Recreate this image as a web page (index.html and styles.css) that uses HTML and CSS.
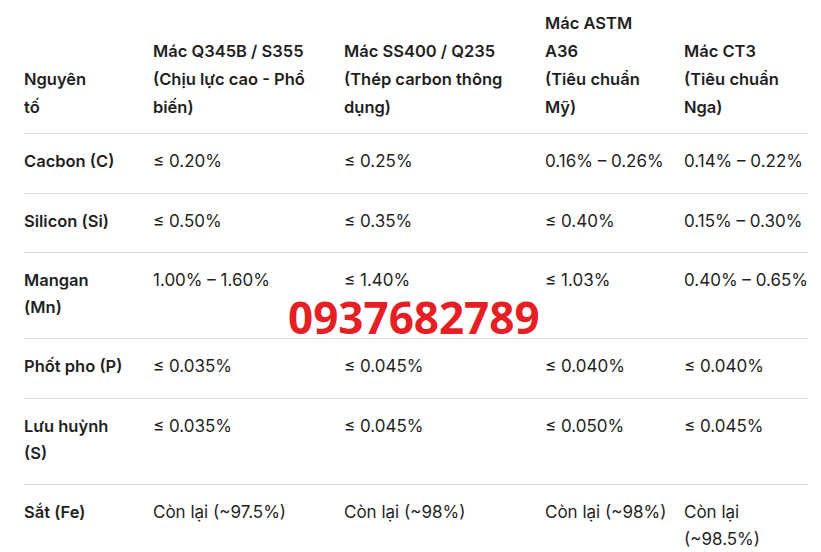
FILE: index.html
```html
<!DOCTYPE html>
<html lang="vi">
<head>
<meta charset="utf-8">
<title>Thành phần hóa học thép</title>
<link rel="stylesheet" href="styles.css">
</head>
<body>
<div class="wrap">
  <table class="spec">
    <colgroup>
      <col class="c1"><col class="c2"><col class="c3"><col class="c4"><col class="c5">
    </colgroup>
    <thead>
      <tr>
        <th>Nguyên<br>tố</th>
        <th>Mác Q345B / S355<br>(Chịu lực cao - Phổ<br>biến)</th>
        <th>Mác SS400 / Q235<br>(Thép carbon thông<br>dụng)</th>
        <th>Mác ASTM<br>A36<br>(Tiêu chuẩn<br>Mỹ)</th>
        <th>Mác CT3<br>(Tiêu chuẩn<br>Nga)</th>
      </tr>
    </thead>
    <tbody>
      <tr>
        <th>Cacbon (C)</th>
        <td><span class="le">≤</span> 0.20%</td>
        <td><span class="le">≤</span> 0.25%</td>
        <td>0.16% – 0.26%</td>
        <td>0.14% – 0.22%</td>
      </tr>
      <tr>
        <th>Silicon (Si)</th>
        <td><span class="le">≤</span> 0.50%</td>
        <td><span class="le">≤</span> 0.35%</td>
        <td><span class="le">≤</span> 0.40%</td>
        <td>0.15% – 0.30%</td>
      </tr>
      <tr>
        <th>Mangan<br>(Mn)</th>
        <td>1.00% – 1.60%</td>
        <td><span class="le">≤</span> 1.40%</td>
        <td><span class="le">≤</span> 1.03%</td>
        <td>0.40% – 0.65%</td>
      </tr>
      <tr>
        <th>Phốt pho (P)</th>
        <td><span class="le">≤</span> 0.035%</td>
        <td><span class="le">≤</span> 0.045%</td>
        <td><span class="le">≤</span> 0.040%</td>
        <td><span class="le">≤</span> 0.040%</td>
      </tr>
      <tr>
        <th>Lưu huỳnh<br>(S)</th>
        <td><span class="le">≤</span> 0.035%</td>
        <td><span class="le">≤</span> 0.045%</td>
        <td><span class="le">≤</span> 0.050%</td>
        <td><span class="le">≤</span> 0.045%</td>
      </tr>
      <tr>
        <th>Sắt (Fe)</th>
        <td>Còn lại (~97.5%)</td>
        <td>Còn lại (~98%)</td>
        <td>Còn lại (~98%)</td>
        <td>Còn lại<br>(~98.5%)</td>
      </tr>
    </tbody>
  </table>
  <div class="phone">0937682789</div>
</div>
</body>
</html>
```

FILE: styles.css
```css
html, body {
  margin: 0;
  padding: 0;
  background: #ffffff;
}

body {
  font-family: Inter, "Noto Sans", sans-serif;
  color: #1f1f1f;
}

.wrap {
  position: relative;
  padding: 0 13px 0 24px;
}

.spec {
  width: 784px;
  table-layout: fixed;
  border-collapse: collapse;
}

.c1 { width: 129px; }
.c2 { width: 191px; }
.c3 { width: 201px; }
.c4 { width: 139px; }
.c5 { width: 124px; }

.spec th,
.spec td {
  text-align: left;
  vertical-align: top;
  line-height: 26.6px;
  white-space: nowrap;
  padding: 14px 0 18px 0;
  border-bottom: 1px solid #dcdcdc;
}

.spec th {
  font-size: 16.5px;
  font-weight: 600;
}

.spec td {
  font-size: 17px;
  font-weight: 400;
}

.spec thead th {
  vertical-align: bottom;
  line-height: 28px;
  padding: 9px 0 12px 0;
}

.spec tbody tr:last-child th,
.spec tbody tr:last-child td {
  border-bottom: none;
}

.le {
  text-decoration: none;
}

.phone {
  position: absolute;
  left: 288px;
  top: 290px;
  font-family: "Open Sans", sans-serif;
  font-weight: 700;
  font-size: 44px;
  line-height: 54px;
  color: #e41f26;
}
```
